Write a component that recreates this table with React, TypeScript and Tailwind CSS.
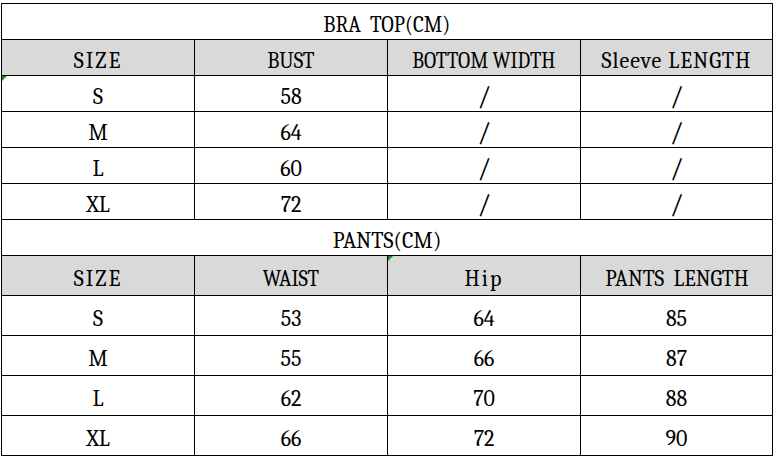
const braRows = [
  ["S", "58", "/", "/"],
  ["M", "64", "/", "/"],
  ["L", "60", "/", "/"],
  ["XL", "72", "/", "/"],
];

const pantsRows = [
  ["S", "53", "64", "85"],
  ["M", "55", "66", "87"],
  ["L", "62", "70", "88"],
  ["XL", "66", "72", "90"],
];

const colWidths = ["w-[193px]", "w-[193px]", "w-[193px]", "w-[192px]"];

function Marker() {
  return (
    <span className="absolute left-0 top-0 h-0 w-0 border-t-[5px] border-r-[5px] border-t-[#1e8a2e] border-r-transparent" />
  );
}

function Cell({
  i,
  children,
  fit,
  marker,
}: {
  i: number;
  children: React.ReactNode;
  fit?: string;
  marker?: boolean;
}) {
  return (
    <div
      className={`relative flex ${colWidths[i]} shrink-0 items-center justify-center border-r border-black pt-[6px]`}
    >
      {marker && <Marker />}
      <span className={`inline-block whitespace-pre ${fit ?? ""}`}>{children}</span>
    </div>
  );
}

function Slash() {
  return <span className="text-[27px] font-light leading-none">/</span>;
}

export default function App() {
  return (
    <div className="h-[460px] w-[777px] bg-white pl-[1px] pt-[3px] font-serif text-[22px] leading-none text-black">
      <div className="w-[772px] border-l border-t border-black">
        <div className="flex h-[36px] items-center justify-center border-b border-r border-black pt-[6px]">
          <span className="inline-block scale-x-[0.95] whitespace-pre">BRA  TOP(CM)</span>
        </div>
        <div className="flex h-[36px] border-b border-black bg-[#d9d9d9]">
          <Cell i={0} fit="tracking-[2px]">SIZE</Cell>
          <Cell i={1} fit="scale-x-[0.95]">BUST</Cell>
          <Cell i={2} fit="scale-x-[0.92]">BOTTOM WIDTH</Cell>
          <Cell i={3} fit="tracking-[1px]">Sleeve LENGTH</Cell>
        </div>
        {braRows.map((r, ri) => (
          <div key={r[0]} className="flex h-[36px] border-b border-black">
            <Cell i={0} marker={ri === 0}>{r[0]}</Cell>
            <Cell i={1}>{r[1]}</Cell>
            <Cell i={2}>
              <Slash />
            </Cell>
            <Cell i={3}>
              <Slash />
            </Cell>
          </div>
        ))}
        <div className="flex h-[36px] items-center justify-center border-b border-r border-black pt-[6px]">
          <span className="inline-block whitespace-pre">PANTS(CM)</span>
        </div>
        <div className="flex h-[40px] border-b border-black bg-[#d9d9d9]">
          <Cell i={0} fit="tracking-[2px]">SIZE</Cell>
          <Cell i={1} fit="scale-x-[0.94]">WAIST</Cell>
          <Cell i={2} marker fit="tracking-[2px]">Hip</Cell>
          <Cell i={3} fit="scale-x-[0.97]">PANTS  LENGTH</Cell>
        </div>
        {pantsRows.map((r) => (
          <div key={r[0]} className="flex h-[40px] border-b border-black">
            <Cell i={0}>{r[0]}</Cell>
            <Cell i={1}>{r[1]}</Cell>
            <Cell i={2}>{r[2]}</Cell>
            <Cell i={3}>{r[3]}</Cell>
          </div>
        ))}
      </div>
    </div>
  );
}
